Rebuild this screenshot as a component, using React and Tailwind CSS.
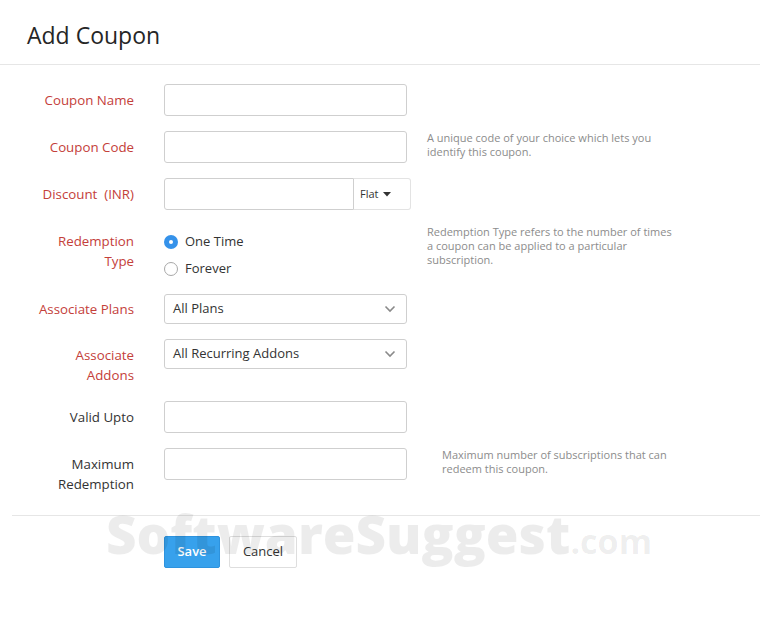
import { useState } from "react";

const font = { fontFamily: '"Open Sans", "Liberation Sans", sans-serif' };

const Chevron = () => (
  <svg width="12" height="8" viewBox="0 0 12 8" className="text-[#8a8a8a]">
    <path d="M1.5 1.5 L6 6 L10.5 1.5" fill="none" stroke="currentColor" strokeWidth="1.6" />
  </svg>
);

const TextInput = ({ className = "" }) => (
  <input
    type="text"
    className={`h-[32px] w-[243px] rounded-[3px] border border-[#cfcfcf] bg-white px-2 text-[13px] outline-none ${className}`}
  />
);

const Select = ({ value }) => (
  <div className="flex h-[30px] w-[243px] items-center justify-between rounded-[3px] border border-[#cfcfcf] bg-white pl-[8px] pr-[10px] text-[13px] text-[#333]">
    <span>{value}</span>
    <Chevron />
  </div>
);

const Label = ({ children, required = true, className = "" }) => (
  <div
    className={`w-[134px] shrink-0 text-right text-[13.3px] leading-[20px] ${
      required ? "text-[#c4403a]" : "text-[#333]"
    } ${className}`}
  >
    {children}
  </div>
);

const Help = ({ children, className = "" }) => (
  <p className={`text-[11px] leading-[14px] text-[#8c8c8c] ${className}`}>{children}</p>
);

const Radio = ({ checked, label, onClick }) => (
  <button type="button" onClick={onClick} className="flex h-[27px] items-center gap-[7px] text-[13px] text-[#333]">
    {checked ? (
      <span className="flex h-[14px] w-[14px] items-center justify-center rounded-full bg-[#3592ea]">
        <span className="h-[4px] w-[4px] rounded-full bg-white" />
      </span>
    ) : (
      <span className="h-[14px] w-[14px] rounded-full border border-[#a8a8a8] bg-white" />
    )}
    <span>{label}</span>
  </button>
);

export default function App() {
  const [type, setType] = useState("once");

  return (
    <div style={font} className="relative h-[624px] w-[760px] overflow-hidden bg-white text-[#333]">
      <div className="flex h-[65px] items-center border-b border-[#e6e6e6] pl-[27px] pt-[6px]">
        <h1 className="text-[23px] font-normal text-[#262626]">Add Coupon</h1>
      </div>

      <div className="pt-[19px]">
        <div className="flex items-center">
          <Label>Coupon Name</Label>
          <TextInput className="ml-[30px]" />
        </div>

        <div className="mt-[15px] flex items-start">
          <Label className="mt-[6px]">Coupon Code</Label>
          <TextInput className="ml-[30px]" />
          <Help className="ml-[20px] mt-[0px] w-[250px]">
            A unique code of your choice which lets you identify this coupon.
          </Help>
        </div>

        <div className="mt-[15px] flex items-center">
          <Label>Discount&nbsp; (INR)</Label>
          <div className="ml-[30px] flex">
            <input
              type="text"
              className="h-[32px] w-[190px] rounded-l-[3px] border border-[#cfcfcf] bg-white px-2 text-[13px] outline-none"
            />
            <div className="flex h-[32px] w-[57px] items-center gap-[4px] rounded-r-[3px] border border-l-0 border-[#e3e3e3] pl-[6px] text-[11px] text-[#333]">
              Flat
              <svg width="8" height="5" viewBox="0 0 8 5">
                <path d="M0 0 H8 L4 4.5 Z" fill="#333" />
              </svg>
            </div>
          </div>
        </div>

        <div className="mt-[18px] flex items-start">
          <Label className="mt-[3px]">
            Redemption
            <br />
            Type
          </Label>
          <div className="ml-[30px] flex w-[243px] flex-col">
            <Radio checked={type === "once"} label="One Time" onClick={() => setType("once")} />
            <Radio checked={type === "forever"} label="Forever" onClick={() => setType("forever")} />
          </div>
          <Help className="ml-[20px] mt-[-3px] w-[248px]">
            Redemption Type refers to the number of times a coupon can be applied to a particular subscription.
          </Help>
        </div>

        <div className="mt-[12px] flex items-center">
          <Label>Associate Plans</Label>
          <div className="ml-[30px]">
            <Select value="All Plans" />
          </div>
        </div>

        <div className="mt-[15px] flex items-start">
          <Label className="mt-[6px]">
            Associate
            <br />
            Addons
          </Label>
          <div className="ml-[30px]">
            <Select value="All Recurring Addons" />
          </div>
        </div>

        <div className="mt-[16px] flex items-center">
          <Label required={false}>Valid Upto</Label>
          <TextInput className="ml-[30px]" />
        </div>

        <div className="mt-[15px] flex items-start">
          <Label required={false} className="mt-[6px]">
            Maximum
            <br />
            Redemption
          </Label>
          <TextInput className="ml-[30px]" />
          <Help className="ml-[35px] mt-[0px] w-[240px]">
            Maximum number of subscriptions that can redeem this coupon.
          </Help>
        </div>

        <div className="ml-[12px] mt-[21px] border-t border-[#e6e6e6] pl-[152px] pt-[20px]">
          <div className="flex gap-[9px]">
            <button
              type="button"
              className="h-[32px] w-[56px] rounded-[2px] border border-[#2e93de] bg-[#37a1ec] text-[13px] font-semibold text-white"
            >
              Save
            </button>
            <button
              type="button"
              className="h-[32px] w-[68px] rounded-[2px] border border-[#dedede] bg-white text-[13px] text-[#333]"
            >
              Cancel
            </button>
          </div>
        </div>
      </div>

      <div className="pointer-events-none absolute left-[106px] top-[494px] flex items-baseline text-[rgba(0,0,0,0.075)]">
        <span className="text-[53px] font-extrabold">SoftwareSuggest</span>
        <span className="text-[34px] font-bold">.com</span>
      </div>
    </div>
  );
}
